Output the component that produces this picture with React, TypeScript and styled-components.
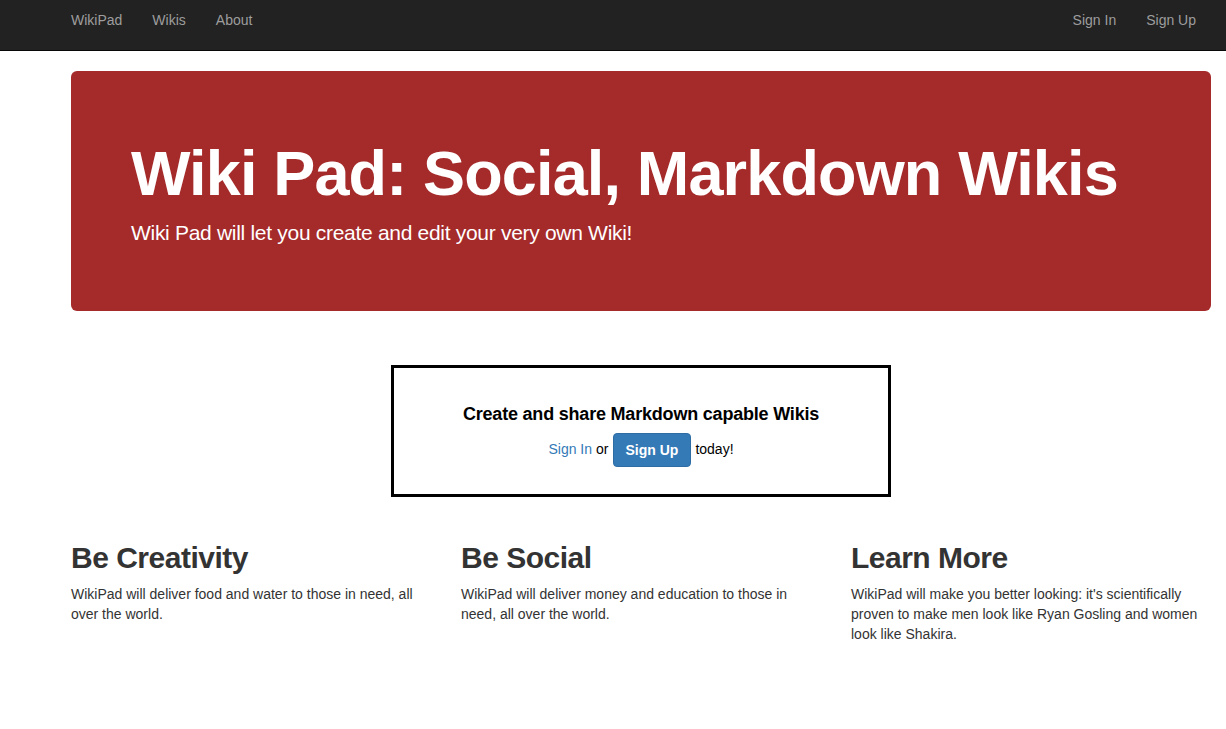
import React from 'react';
import styled, { createGlobalStyle } from 'styled-components';

const GlobalStyle = createGlobalStyle`
  * {
    box-sizing: border-box;
  }
  body {
    margin: 0;
    font-family: "Liberation Sans", Helvetica, Arial, sans-serif;
    font-size: 14px;
    line-height: 1.42857;
    color: #333;
    background: #fff;
  }
`;

const StyledNavbar = styled.nav`
  height: 51px;
  background-color: #222;
  border-bottom: 1px solid #080808;
  margin-bottom: 20px;
`;

const StyledNavInner = styled.div`
  display: flex;
  justify-content: space-between;
  align-items: flex-start;
  height: 50px;
  padding: 0 15px 0 56px;
`;

const StyledNavGroup = styled.div`
  display: flex;
`;

const StyledNavLink = styled.a`
  display: block;
  padding: 10px 15px;
  line-height: 20px;
  font-size: 14px;
  color: #9d9d9d;
  text-decoration: none;
  cursor: pointer;
`;

const StyledContainer = styled.div`
  padding: 0 15px 0 71px;
`;

const StyledJumbotron = styled.div`
  width: 1140px;
  background-color: #a52a2a;
  color: #fff;
  border-radius: 6px;
  padding: 48px 60px;
  h1 {
    margin: 20px 0 10px;
    font-size: 63px;
    line-height: 1.1;
    font-weight: 700;
    letter-spacing: -0.85px;
  }
  p {
    margin: 0 0 15px;
    font-size: 21px;
    line-height: 30px;
    letter-spacing: -0.3px;
  }
`;

const StyledCallout = styled.div`
  width: 500px;
  margin: 54px 0 0 320px;
  border: 3px solid #000;
  padding: 28px 0 27px;
  text-align: center;
  color: #000;
  h4 {
    margin: 8px 0 9px;
    font-size: 18px;
    line-height: 20px;
    font-weight: 700;
    letter-spacing: -0.2px;
  }
`;

const StyledCalloutRow = styled.div`
  display: flex;
  justify-content: center;
  align-items: center;
  gap: 4px;
`;

const StyledLink = styled.a`
  color: #337ab7;
  text-decoration: none;
  cursor: pointer;
`;

const StyledButton = styled.button`
  font-family: inherit;
  font-size: 14px;
  font-weight: 700;
  line-height: 20px;
  padding: 6px 12px;
  color: #fff;
  background-color: #337ab7;
  border: 1px solid #2e6da4;
  border-radius: 4px;
  cursor: pointer;
`;

const StyledColumns = styled.div`
  display: grid;
  grid-template-columns: repeat(3, 360px);
  column-gap: 30px;
  margin-top: 24px;
  h2 {
    margin: 20px 0 10px;
    font-size: 30px;
    line-height: 33px;
    font-weight: 700;
    letter-spacing: -0.5px;
    color: #333;
  }
  p {
    margin: 0 0 10px;
    line-height: 20px;
  }
`;

const features = [
  {
    title: 'Be Creativity',
    text: 'WikiPad will deliver food and water to those in need, all over the world.',
  },
  {
    title: 'Be Social',
    text: 'WikiPad will deliver money and education to those in need, all over the world.',
  },
  {
    title: 'Learn More',
    text: "WikiPad will make you better looking: it's scientifically proven to make men look like Ryan Gosling and women look like Shakira.",
  },
];

const App = () => {
  return (
    <>
      <GlobalStyle />
      <StyledNavbar>
        <StyledNavInner>
          <StyledNavGroup>
            <StyledNavLink>WikiPad</StyledNavLink>
            <StyledNavLink>Wikis</StyledNavLink>
            <StyledNavLink>About</StyledNavLink>
          </StyledNavGroup>
          <StyledNavGroup>
            <StyledNavLink>Sign In</StyledNavLink>
            <StyledNavLink>Sign Up</StyledNavLink>
          </StyledNavGroup>
        </StyledNavInner>
      </StyledNavbar>
      <StyledContainer>
        <StyledJumbotron>
          <h1>Wiki Pad: Social, Markdown Wikis</h1>
          <p>Wiki Pad will let you create and edit your very own Wiki!</p>
        </StyledJumbotron>
        <StyledCallout>
          <h4>Create and share Markdown capable Wikis</h4>
          <StyledCalloutRow>
            <StyledLink>Sign In</StyledLink>
            <span>or</span>
            <StyledButton>Sign Up</StyledButton>
            <span>today!</span>
          </StyledCalloutRow>
        </StyledCallout>
        <StyledColumns>
          {features.map((f) => (
            <div key={f.title}>
              <h2>{f.title}</h2>
              <p>{f.text}</p>
            </div>
          ))}
        </StyledColumns>
      </StyledContainer>
    </>
  );
};

export default App;
